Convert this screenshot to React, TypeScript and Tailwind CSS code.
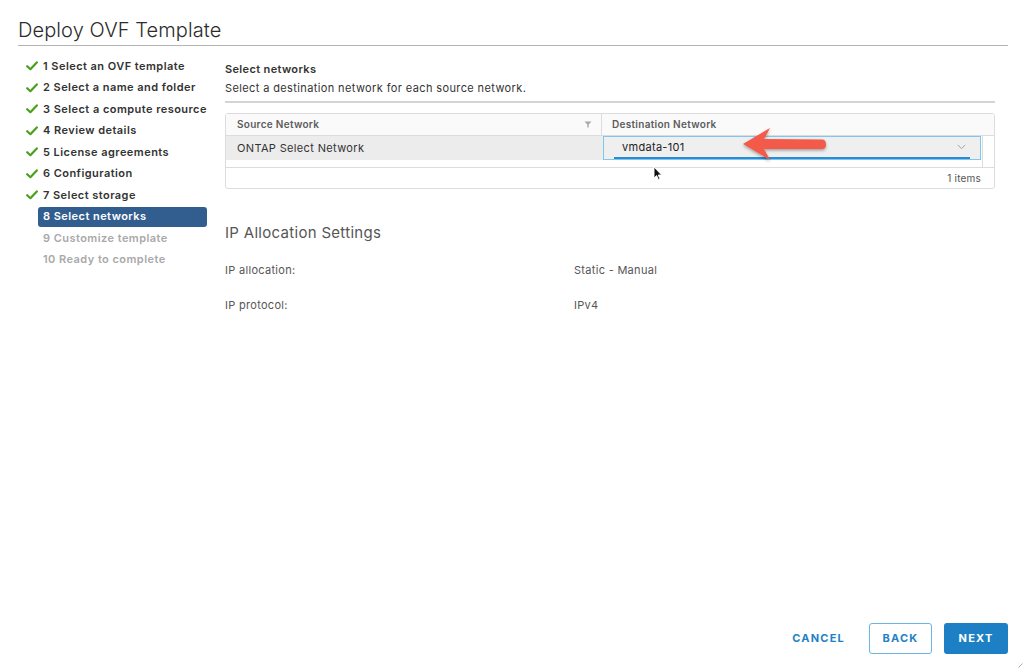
import React from "react";

const steps = [
  { n: "1 Select an OVF template", s: "done" },
  { n: "2 Select a name and folder", s: "done" },
  { n: "3 Select a compute resource", s: "done" },
  { n: "4 Review details", s: "done" },
  { n: "5 License agreements", s: "done" },
  { n: "6 Configuration", s: "done" },
  { n: "7 Select storage", s: "done" },
  { n: "8 Select networks", s: "active" },
  { n: "9 Customize template", s: "todo" },
  { n: "10 Ready to complete", s: "todo" },
];

function Check() {
  return (
    <svg width="12" height="10" viewBox="0 0 12 10">
      <polyline points="1.2,5.2 4.4,8.2 10.8,1.4" fill="none" stroke="#48a01b" strokeWidth="2.2" strokeLinecap="round" strokeLinejoin="round" />
    </svg>
  );
}

export default function App() {
  return (
    <div className="w-[1024px] h-[670px] bg-white relative flex flex-col overflow-hidden text-[#333] font-['Inter',sans-serif]">
      <div className="ml-[18px] mr-[16px] pt-[18px] pb-[3px] border-b border-[#b4b4b4]">
        <div className="text-[20px] leading-[24px] font-light text-[#2b2b2b] tracking-[0.1px]">Deploy OVF Template</div>
      </div>

      <div className="flex flex-1">
        <div className="ml-[26px] mt-[10px] w-[181px] flex flex-col gap-[1.5px]">
          {steps.map((st) => (
            <div key={st.n} className="flex items-center h-[20px]">
              <div className="w-[12px] flex items-center">{st.s === "done" && <Check />}</div>
              <div
                className={
                  "flex-1 h-[20px] flex items-center pl-[5px] rounded-[3px] text-[11px] font-semibold tracking-[0.45px] " +
                  (st.s === "active" ? "bg-[#315e8e] text-white" : st.s === "done" ? "text-[#333]" : "text-[#a9a9a9]")
                }
              >
                {st.n}
              </div>
            </div>
          ))}
        </div>

        <div className="ml-[18px] w-[770px] flex flex-col">
          <div className="pt-[15px] text-[11px] leading-[16px] font-semibold text-[#333] tracking-[0.35px]">Select networks</div>
          <div className="mt-[3px] pb-[5px] text-[11px] leading-[16px] text-[#333] tracking-[0.38px] border-b-2 border-[#d4d4d4]">
            Select a destination network for each source network.
          </div>

          <div className="relative mt-[10px] border border-[#dcdcdc] rounded-[3px] text-[11px]">
            <div className="flex h-[22px] border-b border-[#dcdcdc] bg-[#fafafa] text-[10px] font-semibold text-[#5c5c5c] tracking-[0.3px]">
              <div className="w-[376px] flex items-center justify-between pl-[11px] pr-[9px] border-r border-[#dcdcdc]">
                <span>Source Network</span>
                <svg width="8" height="7" viewBox="0 0 8 7">
                  <path d="M0.5 0.5 H7.5 L4.7 3.6 V6.5 H3.3 V3.6 Z" fill="#a8a8a8" />
                </svg>
              </div>
              <div className="flex items-center pl-[10px]">Destination Network</div>
            </div>
            <div className="flex h-[32px] border-b border-[#dcdcdc]">
              <div className="flex-1 flex flex-col">
                <div className="flex h-[24px] bg-[#ececec]">
                  <div className="w-[377px] flex items-center pl-[11px] text-[11px] text-[#333] tracking-[0.35px]">ONTAP Select Network</div>
                  <div className="flex-1 border border-[#7cc8ef] bg-[#efefef] flex items-stretch px-[10px]">
                    <div className="flex-1 flex items-center justify-between border-b-2 border-[#2b8bd3] pl-[8px] pr-[4px] text-[11px] text-[#222] tracking-[0.3px]">
                      <span>vmdata-101</span>
                      <svg width="9" height="6" viewBox="0 0 9 6">
                        <polyline points="0.8,1 4.5,4.6 8.2,1" fill="none" stroke="#9a9a9a" strokeWidth="0.9" />
                      </svg>
                    </div>
                  </div>
                </div>
              </div>
              <div className="w-[12px] ml-[1px] border-l border-[#dcdcdc]" />
            </div>
            <div className="h-[20px] flex items-center justify-end pr-[13px] text-[10px] text-[#555] tracking-[0.2px]">1 items</div>
          </div>

          <div className="mt-[34px] text-[15px] leading-[20px] text-[#565656] tracking-[0.3px]">IP Allocation Settings</div>
          <div className="mt-[17px] flex text-[11px] leading-[20px] text-[#565656] tracking-[0.3px]">
            <div className="w-[349px]">IP allocation:</div>
            <div>Static - Manual</div>
          </div>
          <div className="mt-[15px] flex text-[11px] leading-[20px] text-[#565656] tracking-[0.3px]">
            <div className="w-[349px]">IP protocol:</div>
            <div>IPv4</div>
          </div>
        </div>
      </div>

      <div className="flex justify-end items-center gap-[12px] mr-[16px] mb-[16px]">
        <button className="h-[31px] px-[12px] text-[11px] font-bold tracking-[1.2px] text-[#1f82c6]">CANCEL</button>
        <button className="h-[31px] w-[63px] rounded-[3px] border border-[#6cb3e6] text-[11px] font-bold tracking-[1.2px] text-[#1f82c6]">BACK</button>
        <button className="h-[31px] w-[64px] rounded-[3px] bg-[#1e80c4] text-[11px] font-bold tracking-[1.2px] text-white">NEXT</button>
      </div>

      {/* red annotation arrow */}
      <svg className="absolute left-[738px] top-[124px]" width="96" height="42" viewBox="0 0 96 42">
        <defs>
          <filter id="sh" x="-20%" y="-30%" width="140%" height="160%">
            <feDropShadow dx="0" dy="1.5" stdDeviation="1.4" floodColor="#000" floodOpacity="0.35" />
          </filter>
        </defs>
        <g filter="url(#sh)">
          <path d="M5 20 L32 4 Q29 10 26 15 L84 15.5 Q88 15.5 88 20.5 Q88 25 84 25 L26 25 Q29 30 32 36 Z" fill="#f35a4a" />
        </g>
      </svg>

      {/* mouse cursor */}
      <svg className="absolute left-[653px] top-[166px]" width="10" height="15" viewBox="0 0 10 15">
        <path d="M1 1 L1 12 L3.6 9.6 L5.5 13.8 L7 13.1 L5.2 9 L8.6 9 Z" fill="#111" stroke="#fff" strokeWidth="0.9" strokeLinejoin="round" />
      </svg>

      {/* resize grip */}
      <svg className="absolute right-[1px] bottom-[2px]" width="5" height="5" viewBox="0 0 5 5">
        <line x1="0.5" y1="4.5" x2="4.5" y2="0.5" stroke="#999" strokeWidth="0.8" />
      </svg>
    </div>
  );
}
